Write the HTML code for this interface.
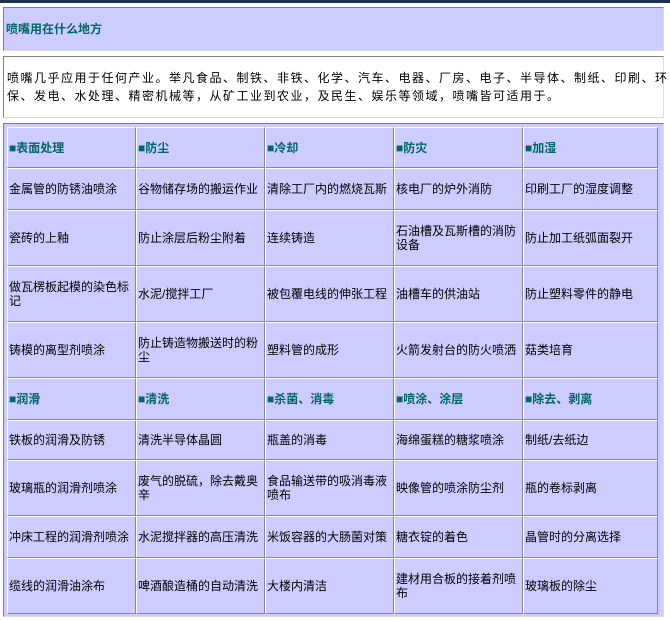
<!DOCTYPE html>
<html><head><meta charset="utf-8"><style>
body{margin:0;background:#fff;font-family:"Liberation Sans","Noto Sans CJK SC","WenQuanYi Zen Hei",sans-serif;font-size:12px;color:#000;width:670px;height:620px;overflow:hidden;position:relative}
.top{position:absolute;left:0;top:0;width:670px;height:3px;background:#1d3050}
.box{position:absolute;left:3px;width:661px;border:1px solid #808080;border-right-color:#ddd;border-bottom-color:#ddd}
.t1{top:7px;background:#ccccff;color:#006666;font-weight:bold;line-height:43px;padding-left:2px;box-sizing:border-box;height:44px}
.t2{top:56px;height:62px;background:#fff;padding:12px 0 0 3px;box-sizing:border-box;line-height:18px;letter-spacing:1.5px;white-space:nowrap}
.t3{top:123px;height:494px;background:#ccccff;padding:3px;box-sizing:border-box}
table{border-collapse:separate;border-spacing:0;width:651px}
td{border:1px solid;border-color:#fff #888 #888 #fff;padding:0 1px;line-height:14px;vertical-align:middle;box-sizing:border-box}
td.h{color:#006666;font-weight:bold}
</style></head><body>
<div class="top"></div>
<div class="box t1">喷嘴用在什么地方</div>
<div class="box t2">喷嘴几乎应用于任何产业。举凡食品、制铁、非铁、化学、汽车、电器、厂房、电子、半导体、制纸、印刷、环<br>保、发电、水处理、精密机械等，从矿工业到农业，及民生、娱乐等领域，喷嘴皆可适用于。</div>
<div class="box t3"><table>
<colgroup><col style="width:129px"><col style="width:129px"><col style="width:129px"><col style="width:129px"><col style="width:135px"></colgroup>
<tr style="height:41px"><td class="h">■表面处理</td><td class="h">■防尘</td><td class="h">■冷却</td><td class="h">■防灾</td><td class="h">■加湿</td></tr>
<tr style="height:42px"><td>金属管的防锈油喷涂</td><td>谷物储存场的搬运作业</td><td>清除工厂内的燃烧瓦斯</td><td>核电厂的炉外消防</td><td>印刷工厂的湿度调整</td></tr>
<tr style="height:56px"><td>瓷砖的上釉</td><td>防止涂层后粉尘附着</td><td>连续铸造</td><td>石油槽及瓦斯槽的消防设备</td><td>防止加工纸弧面裂开</td></tr>
<tr style="height:56px"><td>做瓦楞板起模的染色标记</td><td>水泥/搅拌工厂</td><td>被包覆电线的伸张工程</td><td>油槽车的供油站</td><td>防止塑料零件的静电</td></tr>
<tr style="height:56px"><td>铸模的离型剂喷涂</td><td>防止铸造物搬送时的粉尘</td><td>塑料管的成形</td><td>火箭发射台的防火喷洒</td><td>菇类培育</td></tr>
<tr style="height:42px"><td class="h">■润滑</td><td class="h">■清洗</td><td class="h">■杀菌、消毒</td><td class="h">■喷涂、涂层</td><td class="h">■除去、剥离</td></tr>
<tr style="height:40px"><td>铁板的润滑及防锈</td><td>清洗半导体晶圆</td><td>瓶盖的消毒</td><td>海绵蛋糕的糖浆喷涂</td><td>制纸/去纸边</td></tr>
<tr style="height:56px"><td>玻璃瓶的润滑剂喷涂</td><td>废气的脱硫，除去戴奥辛</td><td>食品输送带的吸消毒液喷布</td><td>映像管的喷涂防尘剂</td><td>瓶的卷标剥离</td></tr>
<tr style="height:42px"><td>冲床工程的润滑剂喷涂</td><td>水泥搅拌器的高压清洗</td><td>米饭容器的大肠菌对策</td><td>糖衣锭的着色</td><td>晶管时的分离选择</td></tr>
<tr style="height:56px"><td>缆线的润滑油涂布</td><td>啤酒酿造桶的自动清洗</td><td>大楼内清洁</td><td>建材用合板的接着剂喷布</td><td>玻璃板的除尘</td></tr>
</table></div>
</body></html>
